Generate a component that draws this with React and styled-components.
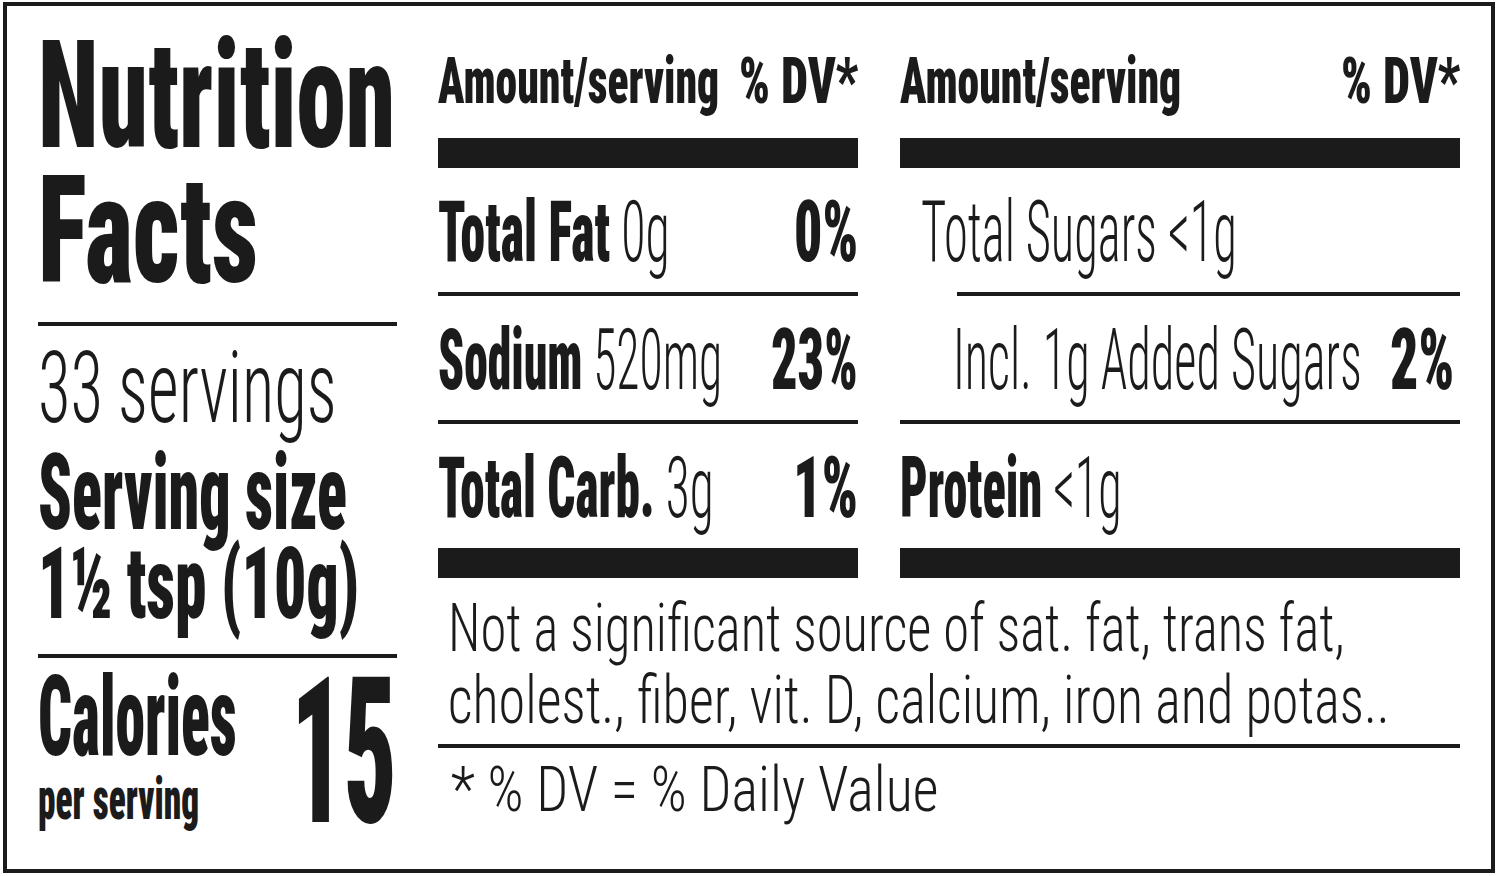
import React, { useLayoutEffect, useRef, useState } from 'react';
import styled, { createGlobalStyle } from 'styled-components';

const ink = '#1b1b1b';

const Global = createGlobalStyle`
  body {
    margin: 0;
    background: #fff;
  }
`;

const Frame = styled.div`
  box-sizing: border-box;
  margin: 2px 0 0 3px;
  width: 1492px;
  height: 871px;
  border: 4px solid ${ink};
  padding: 0 31px;
  display: grid;
  grid-template-columns: 359px 1022px;
  column-gap: 41px;
  font-family: Roboto, 'Open Sans', 'Liberation Sans', sans-serif;
  font-stretch: 75%;
  color: ${ink};
  overflow: hidden;
`;

const Column = styled.div`
  display: flex;
  flex-direction: column;
  min-width: 0;
`;

const TextLine = styled.div`
  font-size: ${p => p.$size}px;
  line-height: ${p => p.$lh}px;
  font-weight: ${p => p.$weight || 900};
  margin-top: ${p => p.$mt || 0}px;
  padding-left: ${p => p.$indent || 0}px;
  white-space: nowrap;
`;

const Rule = styled.div`
  height: ${p => p.$h || 4}px;
  margin-top: ${p => p.$mt || 0}px;
  margin-left: ${p => p.$indent || 0}px;
  background: ${ink};
`;

const CaloriesRow = styled.div`
  display: flex;
  justify-content: space-between;
  align-items: flex-start;
`;

const Stack = styled.div`
  display: flex;
  flex-direction: column;
`;

const Columns = styled.div`
  display: grid;
  grid-template-columns: 420px 560px;
  column-gap: 42px;
`;

const HeaderRow = styled.div`
  display: flex;
  justify-content: space-between;
  margin-top: 41px;
  font-size: 64px;
  line-height: 70px;
  font-weight: 900;
  white-space: nowrap;
`;

const NutrientRow = styled.div`
  height: 124px;
  display: flex;
  justify-content: space-between;
  align-items: flex-start;
  padding-left: ${p => p.$indent || 0}px;
  padding-right: ${p => p.$pr || 0}px;
  font-size: 85px;
  line-height: 128px;
  font-weight: 300;
  white-space: nowrap;
`;

const Bold = styled.span`
  font-weight: 900;
`;

const Light = styled.span`
  font-weight: 300;
`;

const FitBox = styled.span`
  display: inline-block;
  width: ${p => p.$w}px;
  white-space: nowrap;
`;

const FitText = styled.span`
  display: inline-block;
  transform-origin: left center;
`;

// squeezes its text horizontally to the condensed width the label uses
const Fit = ({ w, children }) => {
  const ref = useRef(null);
  const [k, setK] = useState(1);

  useLayoutEffect(() => {
    const measure = () => {
      const nat = ref.current && ref.current.offsetWidth;
      if (nat) setK(w / nat);
    };
    measure();
    if (document.fonts) document.fonts.ready.then(measure);
  }, [w]);

  return (
    <FitBox $w={w}>
      <FitText ref={ref} style={{ transform: `scaleX(${k})` }}>
        {children}
      </FitText>
    </FitBox>
  );
};

const TitleBlock = () => (
  <Column>
    <TextLine $size={150} $lh={135} $mt={23}>
      <Fit w={357}>Nutrition</Fit>
    </TextLine>
    <TextLine $size={150} $lh={135}>
      <Fit w={220}>Facts</Fit>
    </TextLine>
    <Rule $mt={23} />
    <TextLine $size={100} $lh={96} $mt={14} $weight={300}>
      <Fit w={299}>33 servings</Fit>
    </TextLine>
    <TextLine $size={105} $lh={90} $mt={13}>
      <Fit w={309}>Serving size</Fit>
    </TextLine>
    <TextLine $size={100} $lh={90}>
      <Fit w={321}>1½ tsp (10g)</Fit>
    </TextLine>
    <Rule $mt={25} />
    <CaloriesRow>
      <Stack>
        <TextLine $size={112} $lh={100} $mt={9}>
          <Fit w={199}>Calories</Fit>
        </TextLine>
        <TextLine $size={60} $lh={50} $mt={7}>
          <Fit w={161}>per serving</Fit>
        </TextLine>
      </Stack>
      <TextLine $size={204} $lh={160} $mt={15}>
        <Fit w={106}>15</Fit>
      </TextLine>
    </CaloriesRow>
  </Column>
);

const Header = ({ dvWidth }) => (
  <HeaderRow>
    <Fit w={281}>Amount/serving</Fit>
    <Fit w={dvWidth}>% DV*</Fit>
  </HeaderRow>
);

const Nutrient = ({ name, amount, w, dv, dvW, indent, pr, light }) => (
  <NutrientRow $indent={indent} $pr={pr}>
    <Fit w={w}>
      {light ? <Light>{name}</Light> : <Bold>{name}</Bold>}
      {amount && <Light> {amount}</Light>}
    </Fit>
    {dv && (
      <Fit w={dvW}>
        <Bold>{dv}</Bold>
      </Fit>
    )}
  </NutrientRow>
);

const App = () => (
  <>
    <Global />
    <Frame>
      <TitleBlock />
      <Column>
        <Columns>
          <Column>
            <Header dvWidth={119} />
            <Rule $h={30} $mt={21} />
            <Nutrient name="Total Fat" amount="0g" w={232} dv="0%" dvW={64} />
            <Rule />
            <Nutrient name="Sodium" amount="520mg" w={284} dv="23%" dvW={87} />
            <Rule />
            <Nutrient name="Total Carb." amount="3g" w={276} dv="1%" dvW={65} />
            <Rule $h={30} />
          </Column>
          <Column>
            <Header dvWidth={119} />
            <Rule $h={30} $mt={21} />
            <Nutrient name="Total Sugars" amount="<1g" w={316} indent={21} light />
            <Rule $indent={57} />
            <Nutrient
              name="Incl. 1g Added Sugars"
              w={409}
              dv="2%"
              dvW={64}
              indent={53}
              pr={6}
              light
            />
            <Rule />
            <Nutrient name="Protein" amount="<1g" w={222} />
            <Rule $h={30} />
          </Column>
        </Columns>
        <TextLine $size={66} $lh={72} $mt={15} $weight={300} $indent={10}>
          <Fit w={897}>Not a significant source of sat. fat, trans fat,</Fit>
        </TextLine>
        <TextLine $size={66} $lh={72} $weight={300} $indent={10}>
          <Fit w={942}>cholest., fiber, vit. D, calcium, iron and potas..</Fit>
        </TextLine>
        <Rule $mt={7} />
        <TextLine $size={63} $lh={72} $mt={6} $weight={300} $indent={13}>
          <Fit w={488}>* % DV = % Daily Value</Fit>
        </TextLine>
      </Column>
    </Frame>
  </>
);

export default App;
